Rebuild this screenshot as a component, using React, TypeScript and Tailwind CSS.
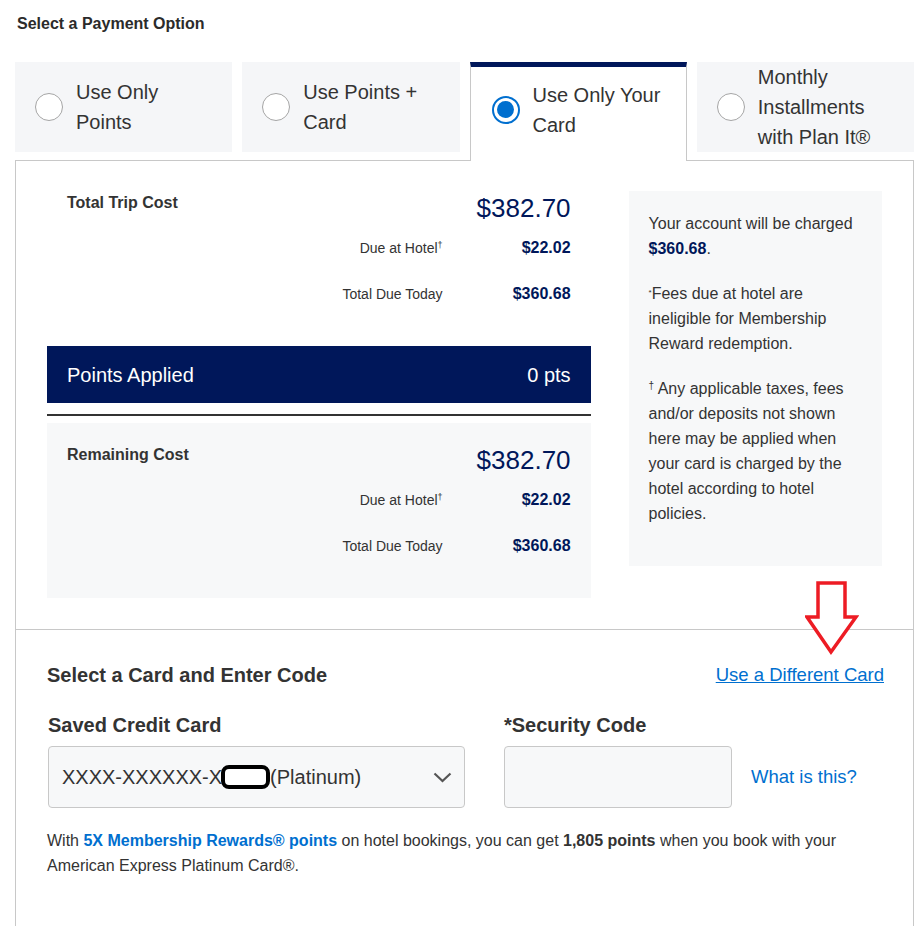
import React from 'react';

const navy = 'text-[#00175a]';

const Radio = ({ checked }: { checked?: boolean }) =>
  checked ? (
    <span className="flex h-[28px] w-[28px] shrink-0 items-center justify-center rounded-full border-2 border-[#006fcf] bg-white">
      <span className="h-[17px] w-[17px] rounded-full bg-[#006fcf]" />
    </span>
  ) : (
    <span className="h-[28px] w-[28px] shrink-0 rounded-full border border-[#a5a5a5] bg-white" />
  );

const Tab = ({ lines, active }: { lines: string[]; active?: boolean }) => (
  <div
    className={
      active
        ? 'relative z-10 flex h-[99px] items-center gap-[13px] border-x border-t-[5px] border-x-[#c8c8c8] border-t-[#00175a] bg-white pb-[9px] pl-[21px]'
        : 'flex h-[90px] items-center gap-[13px] bg-[#f5f6f8] pl-[20px]'
    }
  >
    <Radio checked={active} />
    <div className="text-[20px] leading-[30px] text-[#333]">
      {lines.map((l) => (
        <div key={l}>{l}</div>
      ))}
    </div>
  </div>
);

const CostRows = ({ label }: { label: string }) => (
  <>
    <div className="flex items-start justify-between">
      <span className="mt-[1px] text-[16px] font-bold leading-[18px] text-[#333]">{label}</span>
      <span className={`text-[26px] leading-[30px] ${navy}`}>$382.70</span>
    </div>
    <div className="mt-[2px] flex h-[46px] items-center justify-end">
      <span className="text-[14px] text-[#333]">
        Due at Hotel<sup className="text-[9px]">†</sup>
      </span>
      <span className={`w-[128px] text-right text-[16px] font-bold ${navy}`}>$22.02</span>
    </div>
    <div className="flex h-[46px] items-center justify-end">
      <span className="text-[14px] text-[#333]">Total Due Today</span>
      <span className={`w-[128px] text-right text-[16px] font-bold ${navy}`}>$360.68</span>
    </div>
  </>
);

const App = () => {
  return (
    <div className="relative h-[926px] w-[918px] overflow-hidden bg-white font-['Liberation_Sans',Arial,sans-serif] text-[#333]">
      <div className="pl-[15px] pr-[4px]">
        <h2 className="pl-[2px] pt-[15px] text-[16px] font-bold leading-[18px] text-[#2b2b2b]">
          Select a Payment Option
        </h2>

        <div className="mt-[29px] grid h-[98px] grid-cols-4 items-start gap-[10px]">
          <Tab lines={['Use Only', 'Points']} />
          <Tab lines={['Use Points +', 'Card']} />
          <Tab lines={['Use Only Your', 'Card']} active />
          <Tab lines={['Monthly', 'Installments', 'with Plan It®']} />
        </div>

        <div className="h-[766px] border border-b-0 border-[#c8c8c8]">
          <div className="flex items-start gap-[38px] px-[31px] pb-[31px] pt-[30px]">
            <div className="w-[545px]">
              <div className="px-[20px] pt-[2px]">
                <CostRows label="Total Trip Cost" />
              </div>

              <div className="mt-[29px] flex h-[57px] items-center justify-between bg-[#00175a] px-[20px] text-[20px] text-white">
                <span>Points Applied</span>
                <span>0 pts</span>
              </div>
              <div className="mt-[11px] h-[2px] bg-[#333]" />

              <div className="mt-[7px] bg-[#f7f8f9] px-[20px] pb-[29px] pt-[22px]">
                <CostRows label="Remaining Cost" />
              </div>
            </div>

            <div className="w-[254px] bg-[#f7f8f9] px-[20px] pb-[40px] pt-[20px] text-[16px] leading-[25px] text-[#333]">
              <p>
                Your account will be charged <span className={`font-bold ${navy}`}>$360.68</span>.
              </p>
              <p className="mt-[20px]">
                <sup className="text-[8px]">*</sup>Fees due at hotel are ineligible for Membership Reward redemption.
              </p>
              <p className="mt-[20px]">
                <sup className="text-[10px]">†</sup> Any applicable taxes, fees and/or deposits not shown here may be
                applied when your card is charged by the hotel according to hotel policies.
              </p>
            </div>
          </div>

          <div className="border-t border-[#c8c8c8] pl-[31px] pr-[29px] pt-[34px]">
            <div className="flex items-center justify-between">
              <h3 className="text-[20px] font-bold leading-[22px] text-[#333]">Select a Card and Enter Code</h3>
              <a href="#" className="text-[18.5px] leading-[22px] text-[#006fcf] underline">
                Use a Different Card
              </a>
            </div>

            <div className="ml-[1px] mt-[28px] flex items-end gap-[39px]">
              <div>
                <div className="text-[20px] font-bold leading-[22px] text-[#333]">Saved Credit Card</div>
                <div className="mt-[10px] flex h-[62px] w-[417px] items-center justify-between rounded-[4px] border border-[#c8c8c8] bg-[#f7f8f9] pl-[13px] pr-[12px] text-[20px] text-[#333]">
                  <span className="flex items-center">
                    XXXX-XXXXXX-X
                    <span className="-ml-[1px] inline-block h-[24px] w-[49px] rounded-[8px] border-[4px] border-black bg-white" />
                    (Platinum)
                  </span>
                  <svg width="19" height="11" viewBox="0 0 19 11" fill="none">
                    <polyline points="1.5,1.5 9.5,9 17.5,1.5" stroke="#555" strokeWidth="2.2" />
                  </svg>
                </div>
              </div>
              <div className="flex items-end gap-[19px]">
                <div>
                  <div className="text-[20px] font-bold leading-[22px] text-[#333]">*Security Code</div>
                  <div className="mt-[10px] h-[62px] w-[228px] rounded-[4px] border border-[#c8c8c8] bg-[#f7f8f9]" />
                </div>
                <a href="#" className="flex h-[62px] items-center text-[18.5px] text-[#006fcf]">
                  What is this?
                </a>
              </div>
            </div>

            <p className="mt-[20px] text-[16px] leading-[25px] text-[#333]">
              With <span className="font-bold text-[#006fcf]">5X Membership Rewards® points</span> on hotel bookings,
              you can get <span className="font-bold">1,805 points</span> when you book with your American Express
              Platinum Card®.
            </p>
          </div>
        </div>
      </div>

      {/* red annotation arrow */}
      <svg className="absolute left-[805px] top-[580px]" width="54" height="76" viewBox="0 0 54 76">
        <polygon
          points="13,3 40,3 40,37 51,37 26,72 2,37 13,37"
          fill="white"
          stroke="#ed1c24"
          strokeWidth="3.5"
          strokeLinejoin="miter"
        />
      </svg>
    </div>
  );
};

export default App;
